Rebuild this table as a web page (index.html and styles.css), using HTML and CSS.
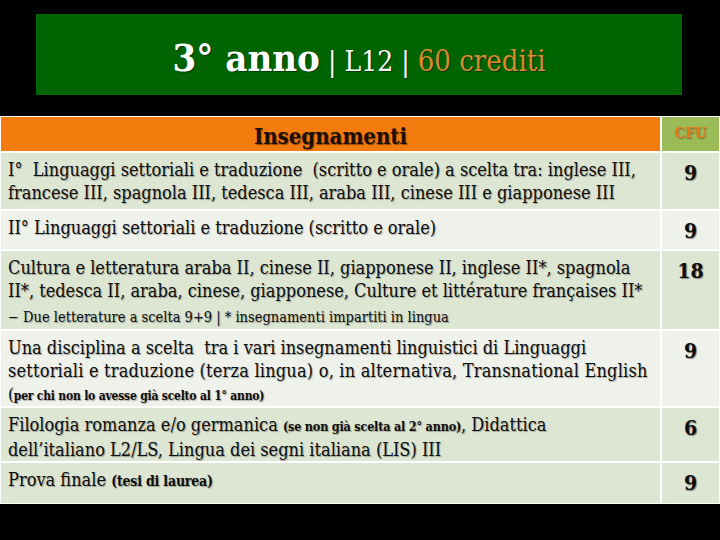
FILE: index.html
```html
<!DOCTYPE html>
<html lang="it">
<head>
<meta charset="utf-8">
<title>3° anno | L12 | 60 crediti</title>
<link rel="stylesheet" href="styles.css">
</head>
<body>
<div class="slide">
  <div class="title">
    <span class="t-big">3° anno</span><span class="t-mid"> | L12 | </span><span class="t-orange">60 crediti</span>
  </div>
  <div class="grid">
    <div class="hd">Insegnamenti</div>
    <div class="hd-cfu">CFU</div>

    <div class="c dark">I°&nbsp; Linguaggi settoriali e traduzione&nbsp; (scritto e orale) a scelta tra: inglese III,<br>francese III, spagnola III, tedesca III, araba III, cinese III e giapponese III</div>
    <div class="n dark">9</div>

    <div class="c light">II° Linguaggi settoriali e traduzione (scritto e orale)</div>
    <div class="n light">9</div>

    <div class="c dark">Cultura e letteratura araba II, cinese II, giapponese II, inglese II*, spagnola<br>II*, tedesca II, araba, cinese, giapponese, Culture et littérature françaises II*
      <div class="note">− Due letterature a scelta 9+9 | * insegnamenti impartiti in lingua</div></div>
    <div class="n dark">18</div>

    <div class="c light">Una disciplina a scelta&nbsp; tra i vari insegnamenti linguistici di Linguaggi<br><span class="wide">settoriali e traduzione (terza lingua) o, in alternativa, Transnational English</span>
      <div class="note2"><span class="paren">(</span>per chi non lo avesse già scelto al 1° anno)</div></div>
    <div class="n light">9</div>

    <div class="c dark">Filologia romanza e/o germanica <span class="sb">(se non già scelta al 2° anno)</span>, Didattica<br>dell’italiano L2/LS, Lingua dei segni italiana (LIS) III</div>
    <div class="n dark">6</div>

    <div class="c dark">Prova finale <span class="sb sb-lg">(tesi di laurea)</span></div>
    <div class="n dark">9</div>
  </div>
</div>
</body>
</html>
```
FILE: styles.css
```css
html, body {
  margin: 0;
  padding: 0;
  background: #000;
}

.slide {
  width: 720px;
  height: 540px;
  padding-top: 14px;
  box-sizing: border-box;
  overflow: hidden;
  font-family: "DejaVu Serif Condensed", "DejaVu Serif", serif;
  font-stretch: condensed;
}

.title {
  margin: 0 38px 0 36px;
  height: 81px;
  box-sizing: border-box;
  padding-top: 22px;
  background: #006400;
  text-align: center;
  white-space: nowrap;
  font-size: 38px;
  line-height: 44px;
  color: #fff;
  text-shadow: 1px 1px 1px rgba(0, 0, 0, 0.45);
}

.t-big {
  font-weight: bold;
  font-size: 38px;
}

.t-mid {
  font-size: 28px;
}

.t-orange {
  font-size: 29px;
  color: #d98a2e;
}

.grid {
  margin-top: 21px;
  width: 720px;
  box-sizing: border-box;
  padding: 1px;
  background: #fff;
  display: grid;
  grid-template-columns: 659px 57px;
  grid-template-rows: 34px 56px 38px 78px 75px 53px 40px;
  gap: 2px;
}

.hd {
  background: #f47b0e;
  text-align: center;
  font-weight: bold;
  font-size: 22px;
  line-height: 34px;
  padding-top: 2px;
  box-sizing: border-box;
  color: #1c0e02;
  text-shadow: 1px 1px 1px rgba(0, 0, 0, 0.45);
}

.hd-cfu {
  background: #9bbb59;
  text-align: center;
  font-weight: bold;
  font-size: 15px;
  line-height: 20px;
  padding-top: 6px;
  box-sizing: border-box;
  color: #e8781a;
  text-shadow: 1px 1px 1px rgba(0, 0, 0, 0.35);
}

.dark {
  background: #dde6d3;
}

.light {
  background: #eef2ea;
}

.c {
  padding: 5px 0 0 7px;
  font-size: 18px;
  line-height: 23px;
  color: #0d0d0d;
  white-space: nowrap;
  text-shadow: 1px 1px 1px rgba(0, 0, 0, 0.3);
}

.wide {
  letter-spacing: 0.2px;
}

.n {
  text-align: center;
  font-weight: bold;
  font-size: 21px;
  line-height: 28px;
  padding-top: 6px;
  box-sizing: border-box;
  color: #0d0d0d;
  text-shadow: 1px 1px 1px rgba(0, 0, 0, 0.4);
}

.note {
  margin-top: 5px;
  font-size: 14.5px;
  line-height: 20px;
}

.note2 {
  margin-top: 2px;
  font-size: 12px;
  font-weight: bold;
  line-height: 20px;
  letter-spacing: -0.2px;
}

.paren {
  font-size: 17px;
  font-weight: normal;
}

.sb {
  font-size: 12.5px;
  font-weight: bold;
  letter-spacing: -0.2px;
}

.sb-lg {
  font-size: 14px;
}
```
